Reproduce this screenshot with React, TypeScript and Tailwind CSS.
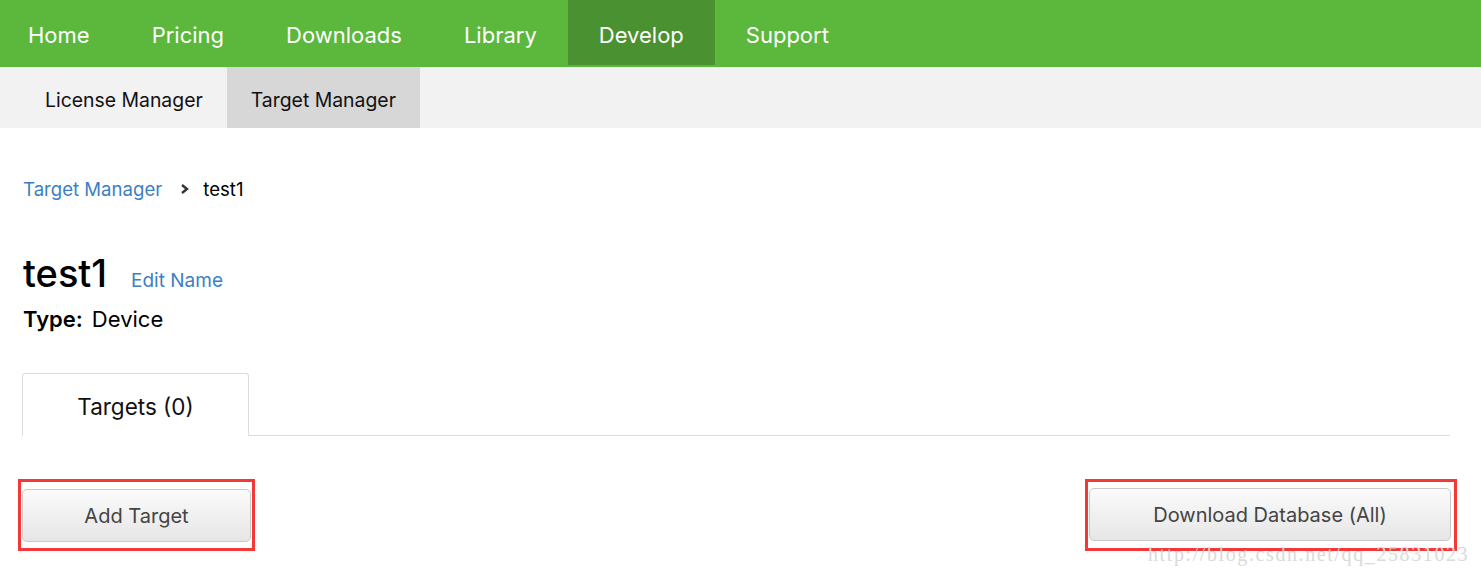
import React from "react";

const mainNav = ["Home", "Pricing", "Downloads", "Library", "Develop", "Support"];
const subNav = ["License Manager", "Target Manager"];

function GrayButton({ label, className }: { label: string; className?: string }) {
  return (
    <button
      className={
        "h-[53px] rounded-[5px] border border-[#c9c9c9] bg-gradient-to-b from-[#fbfbfb] to-[#e6e6e6] text-[20px] text-[#444] " +
        (className || "")
      }
    >
      {label}
    </button>
  );
}

export default function App() {
  return (
    <div className="relative min-h-[572px] bg-white text-black" style={{ fontFamily: "Inter, 'Liberation Sans', sans-serif" }}>
      {/* top nav */}
      <nav className="h-[67px] bg-[#5cb73d] flex -ml-[3px]">
        {mainNav.map((item) => (
          <a
            key={item}
            className={
              "h-[65px] px-[31px] pt-[5px] flex items-center text-[22px] text-white " +
              (item === "Develop" ? "bg-[#4a9131]" : "")
            }
          >
            {item}
          </a>
        ))}
      </nav>

      {/* sub nav */}
      <div className="h-[61px] bg-[#f2f2f2] flex pl-[21px]">
        {subNav.map((item) => (
          <a
            key={item}
            className={
              "h-full px-6 pt-[7px] flex items-center text-[19.4px] text-[#111] " +
              (item === "Target Manager" ? "bg-[#d7d7d7]" : "")
            }
          >
            {item}
          </a>
        ))}
      </div>

      <main className="pl-[23px] pr-[31px]">
        {/* breadcrumb */}
        <div className="pt-[49px] flex items-center h-[73px] text-[18.6px] leading-6">
          <a className="text-[#3b80c3]">Target Manager</a>
          <svg className="ml-[18px] mr-[13px]" width="10" height="12" viewBox="0 0 10 12">
            <path d="M2 2 L7 6 L2 10" stroke="#333" strokeWidth="2.4" fill="none" />
          </svg>
          <span>test1</span>
        </div>

        {/* heading */}
        <div className="mt-[50px] flex items-baseline h-[44px]">
          <h1 className="text-[38px] leading-[44px] font-medium">test1</h1>
          <a className="ml-[24px] text-[19px] text-[#3b80c3]">Edit Name</a>
        </div>
        <div className="mt-[11px] text-[22px] leading-[26px]">
          <span className="font-semibold">Type:</span>
          <span className="ml-[9px]">Device</span>
        </div>

        {/* tabs */}
        <div className="mt-[41px] flex -ml-px">
          <div className="w-[227px] h-[63px] pt-[3px] border border-b-0 border-[#dcdcdc] rounded-t-[3px] flex items-center justify-center text-[22.5px] text-[#111]">
            Targets (0)
          </div>
          <div className="flex-1 border-b border-[#dcdcdc]" />
        </div>

        {/* actions */}
        <div className="mt-[43px] flex justify-between">
          <div className="-ml-[5px] border-[3px] border-[#f43838] pt-[7px] pb-[6px] px-px">
            <GrayButton label="Add Target" className="w-[229px]" />
          </div>
          <div className="-mr-[7px] border-[3px] border-[#f43838] pt-[6px] pb-[6px] pl-px pr-[3px]">
            <GrayButton label="Download Database (All)" className="w-[362px]" />
          </div>
        </div>
      </main>

      {/* watermark */}
      <span
        className="absolute left-[1148px] top-[539px] text-[20px] text-[#dadada] tracking-[1.6px]"
        style={{ fontFamily: "'Liberation Serif', serif" }}
      >
        http://blog.csdn.net/qq_25831023
      </span>
    </div>
  );
}
